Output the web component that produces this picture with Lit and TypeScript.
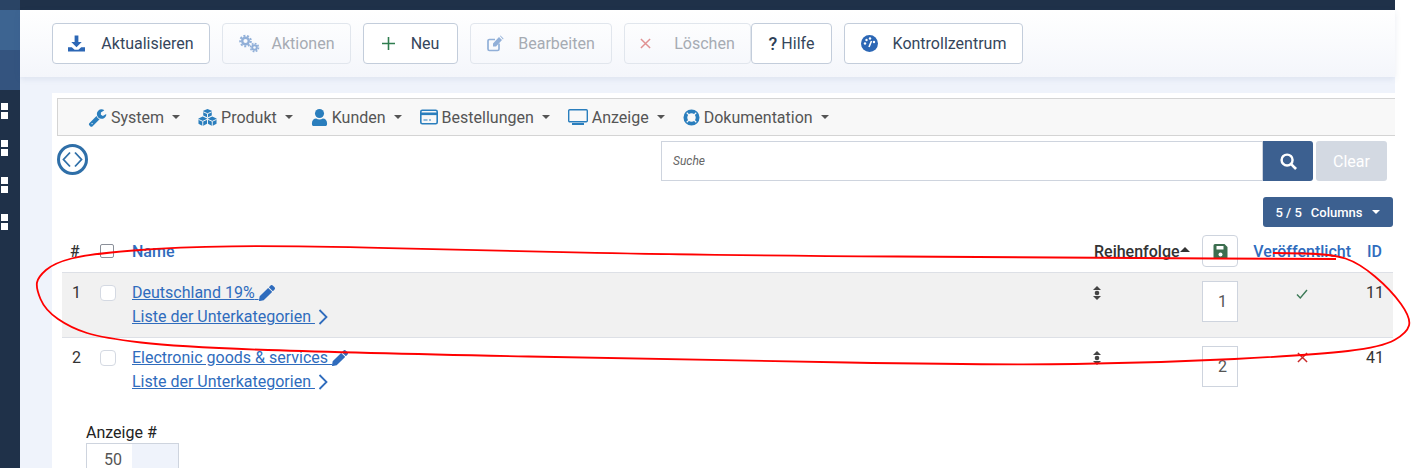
import {LitElement, html, svg, css} from 'lit';
import {customElement} from 'lit/decorators.js';

const icon = (box: string, body: unknown, size = 16, color = 'currentColor') => html`
  <svg class="ic" width=${size} height=${size} viewBox=${box} fill=${color}>${body}</svg>
`;

const pencilPath = 'M498 142l-46 46c-5 5-12 5-17 0L324 77c-5-5-5-12 0-17l46-46c19-19 49-19 68 0l60 60c19 19 19 49 0 68zM284 100L22 362 0 484c-3 16 11 31 28 28l122-21 262-263c5-5 5-12 0-17L301 100c-5-5-12-5-17 0z';
const wrenchPath = 'M448 1472q0-26-19-45t-45-19-45 19-19 45 19 45 45 19 45-19 19-45zm644-420l-682 682q-37 37-90 37-52 0-91-37l-106-108q-38-36-38-90 0-53 38-91l681-681q39 98 114.5 173.5t173.5 114.5zm634-435q0 39-23 106-47 134-164.5 217.5t-258.5 83.5q-185 0-316.5-131.5t-131.5-316.5 131.5-316.5 316.5-131.5q58 0 121.5 16.5t107.5 46.5q16 11 16 28t-16 28l-293 169v224l193 107q5-3 79-48.5t135.5-81 70.5-35.5q15 0 23.5 10t8.5 25z';

const icons = {
  wrench: icon('0 0 1792 1792', svg`<path d=${wrenchPath}/>`, 19),
  cubes: icon('0 0 20 18', svg`
    <path d="M10 0l4.500 2v5L10 9 5.500 7V2z"/>
    <path d="M5 8l4.500 2v5.500L5 18 .5 15.500V10z"/>
    <path d="M15 8l4.500 2v5.500L15 18l-4.500-2.500V10z"/>
    <g stroke="#f8f8f8" stroke-width="1" fill="none">
      <path d="M5.500 3L10 5l4.500-2M10 5v4"/>
      <path d="M.5 11L5 13l4.500-2M5 13v5"/>
      <path d="M10.500 11l4.500 2 4.500-2M15 13v5"/>
    </g>`, 19),
  user: icon('0 0 16 18', svg`<circle cx="8" cy="4.800" r="4.800"/><path d="M1 18a2 2 0 0 1-1-2v-1c0-3 2-5 4.500-5 1 .6 2.200 1 3.500 1s2.500-.4 3.500-1C14 10 16 12 16 15v1a2 2 0 0 1-1 2z"/>`, 17),
  card: icon('0 0 18 15', svg`
    <rect x=".8" y=".8" width="16.400" height="13.400" rx="1.500" fill="none" stroke="currentColor" stroke-width="1.600"/>
    <rect x="1" y="3" width="16" height="2.600"/>
    <path d="M3.500 10.500h4M9 10.500h2" stroke="currentColor" stroke-width="1.200"/>`, 18),
  desktop: icon('0 0 20 16', svg`
    <rect x=".7" y=".7" width="18.600" height="12" rx="1" fill="none" stroke="currentColor" stroke-width="1.400"/>
    <rect x="4" y="14" width="12" height="2"/>`, 20),
  ring: icon('0 0 18 18', svg`
    <circle cx="9" cy="9" r="6.500" fill="none" stroke="currentColor" stroke-width="4"/>
    <path d="M4 4l3 3M14 4l-3 3M4 14l3-3M14 14l-3-3" stroke="#f8f8f8" stroke-width="1.300"/>`, 17),
  download: icon('0 0 18 17', svg`
    <path d="M7 0h4v7h3.500L9 12.500 3.500 7H7z"/>
    <path d="M0 12.500h4l3 2.500h4l3-2.500h4V17H0z"/>`, 17),
  cogs: icon('0 0 21 18', svg`
    <circle cx="6.500" cy="6.500" r="3.300" fill="none" stroke="currentColor" stroke-width="2.400"/>
    <circle cx="6.500" cy="6.500" r="5.300" fill="none" stroke="currentColor" stroke-width="2" stroke-dasharray="2 1.700"/>
    <circle cx="15.500" cy="13" r="2.300" fill="none" stroke="currentColor" stroke-width="2"/>
    <circle cx="15.500" cy="13" r="4" fill="none" stroke="currentColor" stroke-width="1.600" stroke-dasharray="1.800 1.300"/>`, 21),
  plus: icon('0 0 14 14', svg`<path d="M7 0v14M0 7h14" stroke="currentColor" stroke-width="1.700" fill="none"/>`, 13),
  cross: icon('0 0 12 12', svg`<path d="M1 1l10 10M11 1L1 11" stroke="currentColor" stroke-width="1.600" fill="none"/>`, 11),
  edit: icon('0 0 17 16', svg`
    <path d="M12 8v5.500a1.500 1.500 0 0 1-1.500 1.500h-8A1.500 1.500 0 0 1 1 13.500v-8A1.500 1.500 0 0 1 2.500 4H8" fill="none" stroke="currentColor" stroke-width="1.700"/>
    <path d="M6 8l6-6.500 3 3L9 11H6zM13 .5l.5-.5 3 3-.5 1z"/>`, 17),
  gauge: icon('0 0 17 17', svg`
    <circle cx="8.500" cy="8.500" r="8.500"/>
    <g fill="#fff">
      <circle cx="4" cy="8.500" r="1.200"/><circle cx="5.500" cy="5" r="1.200"/><circle cx="9" cy="3.500" r="1.200"/><circle cx="13" cy="7" r="1.200"/>
    </g>
    <path d="M8 12l2.500-6" stroke="#fff" stroke-width="1.600"/>`, 17),
  search: icon('0 0 18 18', svg`<circle cx="7.500" cy="7.500" r="5.800" fill="none" stroke="currentColor" stroke-width="2.600"/><path d="M11.500 11.500L17 17" stroke="currentColor" stroke-width="2.800"/>`, 17),
  save: icon('0 0 14 15', svg`<path d="M1.500 0H11l3 3v10.500a1.500 1.500 0 0 1-1.500 1.500h-11A1.500 1.500 0 0 1 0 13.500v-12A1.500 1.500 0 0 1 1.500 0zM3 2v3.500h7V2z"/><circle cx="7" cy="10.500" r="2" fill="#fff"/>`, 15),
  sort: icon('0 0 9 14', svg`<path d="M4.500 0L8.500 4H.5zM4.500 14L.5 10h8z"/><circle cx="4.500" cy="7" r="2.300"/>`, 14),
  check: icon('0 0 12 10', svg`<path d="M1 5.500L4.300 9 11 1" fill="none" stroke="currentColor" stroke-width="1.400"/>`, 12),
  chevron: icon('0 0 9 16', svg`<path d="M1 1l7 7-7 7" fill="none" stroke="currentColor" stroke-width="1.800"/>`, 16),
  pencil: icon('0 0 512 512', svg`<path d=${pencilPath}/>`, 16),
  circleCode: icon('0 0 31 31', svg`
    <circle cx="15.500" cy="15.500" r="14" fill="none" stroke="currentColor" stroke-width="3"/>
    <path d="M13 8.500l-6.500 7 6.500 7M18 8.500l6.500 7-6.500 7" fill="none" stroke="currentColor" stroke-width="1.800"/>`, 31),
};

const actions = [
  {label: 'Aktualisieren', icon: icons.download, tint: '#2c67b5', width: 158, gap: 16, off: false},
  {label: 'Aktionen', icon: icons.cogs, tint: '#2c67b5', width: 129, gap: 12, off: true},
  {label: 'Neu', icon: icons.plus, tint: '#2f7d4f', width: 95, gap: 16, off: false},
  {label: 'Bearbeiten', icon: icons.edit, tint: '#2c67b5', width: 142, gap: 14, off: true},
  {label: 'Löschen', icon: icons.cross, tint: '#c92a2a', width: 127, gap: 23, off: true},
  {label: 'Hilfe', icon: html`<span class="qm">?</span>`, tint: '#2d3f57', width: 81, gap: 4, off: false},
  {label: 'Kontrollzentrum', icon: icons.gauge, tint: '#2c67b5', width: 179, gap: 15, off: false},
];

const menu = [
  {label: 'System', icon: icons.wrench},
  {label: 'Produkt', icon: icons.cubes},
  {label: 'Kunden', icon: icons.user},
  {label: 'Bestellungen', icon: icons.card},
  {label: 'Anzeige', icon: icons.desktop},
  {label: 'Dokumentation', icon: icons.ring},
];

const rows = [
  {nr: 1, name: 'Deutschland 19%', order: 1, on: true, id: 11},
  {nr: 2, name: 'Electronic goods & services', order: 2, on: false, id: 41},
];

// hand drawn marker round the first row, quadratic through the midpoints
const marker: number[][] = [
  [1336, 259], [1095, 258], [700, 255], [491, 250.7], [286, 245.7], [178, 247], [89, 254], [54, 263],
  [38, 277], [36, 288], [45, 310], [71, 328], [103, 338], [179, 347], [357, 353], [700, 360], [995, 365],
  [1155, 363], [1314, 355], [1382, 347], [1407, 333], [1411, 318], [1391, 290], [1359, 263], [1332, 254], [1273, 253],
];
const markerPath = marker.reduce((d, p, i) => {
  if (i === 0) return `M${p[0]} ${p[1]}`;
  const prev = marker[i - 1];
  return `${d} Q${prev[0]} ${prev[1]} ${(prev[0] + p[0]) / 2} ${(prev[1] + p[1]) / 2}`;
}, '') + ' L1273 253';

@customElement('app-root')
export class AppRoot extends LitElement {
  override render() {
    return html`
      <div class="layout">
        <aside class="side">
          <div class="side-top"></div>
          <div class="side-a"></div>
          <div class="side-b"></div>
          <div class="side-icons">
            ${[0, 1, 2, 3].map(() => html`<div class="squares"><i></i><i></i></div>`)}
          </div>
        </aside>
        <main class="main">
          <div class="topbar"></div>
          <div class="toolbar">
            ${actions.map(a => html`
              <button class="btn ${a.off ? 'off' : ''}" style="width:${a.width}px;gap:${a.gap}px">
                <span class="btn-ic" style="color:${a.tint}">${a.icon}</span>
                <span>${a.label}</span>
              </button>
            `)}
          </div>
          <div class="content">
            <div class="card">
              <nav class="menu">
                ${menu.map(m => html`
                  <span class="menu-item">${m.icon}<span class="menu-label">${m.label}</span><i class="caret"></i></span>
                `)}
              </nav>
              <div class="search-row">
                <span class="circle">${icons.circleCode}</span>
                <div class="search">Suche</div>
                <button class="search-btn">${icons.search}</button>
                <button class="clear">Clear</button>
              </div>
              <div class="columns-row">
                <button class="columns"><span>5 / 5</span><span>Columns</span><i class="caret white"></i></button>
              </div>
              <div class="table">
                <div class="grid head">
                  <span class="hash">#</span>
                  <span><i class="check dark"></i></span>
                  <a class="sort-link">Name</a>
                  <span class="order-head">Reihenfolge<i class="caret up"></i></span>
                  <span class="save">${icons.save}</span>
                  <a class="sort-link pub">Veröffentlicht</a>
                  <a class="sort-link idh">ID</a>
                </div>
                ${rows.map(r => html`
                  <div class="grid row ${r.nr === 1 ? 'shaded' : ''}">
                    <span class="nr">${r.nr}</span>
                    <span><i class="check"></i></span>
                    <div class="links">
                      <div class="link-line"><a>${r.name} </a><span class="pen">${icons.pencil}</span></div>
                      <div class="link-line"><a>Liste der Unterkategorien </a><span class="chev">${icons.chevron}</span></div>
                    </div>
                    <span class="drag">${icons.sort}</span>
                    <span class="order">${r.order}</span>
                    <span class="state ${r.on ? 'on' : 'no'}">${r.on ? icons.check : icons.cross}</span>
                    <span class="idv">${r.id}</span>
                  </div>
                `)}
              </div>
              <div class="pager">
                <div class="pager-label">Anzeige #</div>
                <div class="pager-box"><span class="pager-val">50</span><span class="pager-arrow"></span></div>
              </div>
            </div>
          </div>
        </main>
        <svg class="marker" width="1412" height="468" viewBox="0 0 1412 468">
          <path d=${markerPath} fill="none" stroke="#f00" stroke-width="1.800"/>
        </svg>
      </div>
    `;
  }

  static override styles = css`
    :host {
      display: block;
      width: 1412px;
      height: 468px;
      overflow: hidden;
      background: #fff;
      font-family: 'Roboto', sans-serif;
      font-size: 16px;
      color: #212529;
    }

    .layout {
      position: relative;
      display: flex;
      height: 468px;
      overflow: hidden;
    }

    .ic {
      display: block;
      flex: none;
    }

    .side {
      flex: none;
      width: 20px;
      height: 468px;
      background: #1f3149;
    }

    .side-top { height: 10px; background: #2a4465; }
    .side-a { height: 40px; background: #3d6491; }
    .side-b { height: 40px; background: #34547f; }

    .side-icons {
      display: flex;
      flex-direction: column;
      gap: 21px;
      padding: 13px 0 0 1px;
    }

    .squares {
      display: flex;
      flex-direction: column;
      gap: 2px;
    }

    .squares i {
      display: block;
      width: 7px;
      height: 7px;
      background: #fff;
    }

    .main {
      flex: none;
      width: 1375px;
      height: 468px;
      background: #eff3fb;
    }

    .topbar {
      height: 10px;
      background: #1f3149;
    }

    .toolbar {
      box-sizing: border-box;
      display: flex;
      height: 67px;
      padding: 13px 0 0 32px;
      background: linear-gradient(#fff, #f4f6fb);
      box-shadow: 0 2px 6px rgba(60, 90, 140, 0.1);
    }

    .btn {
      box-sizing: border-box;
      display: flex;
      align-items: center;
      justify-content: center;
      height: 41px;
      margin-right: 12px;
      padding: 0;
      border: 1px solid #c3cddb;
      border-radius: 4px;
      background: #fff;
      font: 16px 'Roboto', sans-serif;
      color: #35465c;
    }

    .btn:nth-child(5) { margin-right: 0; }

    .btn.off {
      border-color: #e1e6ed;
      background: transparent;
      color: #a6abb3;
    }

    .btn.off .btn-ic { opacity: 0.5; }

    .btn-ic {
      display: flex;
      align-items: center;
    }

    .qm {
      font-size: 18px;
      font-weight: 500;
    }

    .content {
      height: 391px;
      padding: 16px 0 0 32px;
    }

    .card {
      height: 375px;
      padding: 5px 0 0 5px;
      background: #fff;
      overflow: hidden;
    }

    .menu {
      box-sizing: border-box;
      display: flex;
      align-items: center;
      gap: 18px;
      height: 38px;
      padding-left: 30px;
      border: 1px solid #d4d4d4;
      border-right: none;
      background: #f8f8f8;
      color: #555;
    }

    .menu-item {
      display: flex;
      align-items: center;
      gap: 4px;
    }

    .menu-item .ic { color: #2a7ebd; }

    .menu-label { margin-right: 2px; }

    .caret {
      display: inline-block;
      width: 0;
      height: 0;
      margin-left: 2px;
      border-top: 4px solid #555;
      border-left: 4.500px solid transparent;
      border-right: 4.500px solid transparent;
    }

    .caret.white { border-top-color: #fff; }

    .caret.up {
      margin: 0 0 3px;
      border-top: none;
      border-bottom: 5px solid #333;
      border-left-width: 5.500px;
      border-right-width: 5.500px;
    }

    .search-row {
      display: flex;
      align-items: flex-start;
      height: 40px;
      margin-top: 5px;
      padding-right: 8px;
    }

    .circle {
      margin: 3px auto 0 0;
      color: #2f6fa8;
    }

    .search {
      box-sizing: border-box;
      width: 602px;
      height: 40px;
      padding-left: 11px;
      border: 1px solid #ced4de;
      font-size: 12px;
      font-style: italic;
      line-height: 38px;
      color: #666;
    }

    .search-btn {
      display: flex;
      align-items: center;
      justify-content: center;
      width: 50px;
      height: 40px;
      padding: 0;
      border: none;
      border-radius: 0 3px 3px 0;
      background: #3c6090;
      color: #fff;
    }

    .clear {
      width: 71px;
      height: 40px;
      margin-left: 3px;
      padding: 0;
      border: none;
      border-radius: 3px;
      background: #d3d9e2;
      color: #fff;
      font: 16px 'Roboto', sans-serif;
    }

    .columns-row {
      display: flex;
      justify-content: flex-end;
      margin-top: 16px;
      padding-right: 2px;
    }

    .columns {
      display: flex;
      align-items: center;
      justify-content: center;
      gap: 9px;
      width: 130px;
      height: 30px;
      padding: 0;
      border: none;
      border-radius: 3px;
      background: #3c6090;
      color: #fff;
      font: 500 13px 'Roboto', sans-serif;
    }

    .columns .caret { margin-left: 1px; }

    .table {
      width: 1331px;
      margin: 8px 0 0 5px;
    }

    .grid {
      display: grid;
      grid-template-columns: 38px 32px 958px 112px 36px 113px 42px;
      box-sizing: border-box;
    }

    .head {
      align-items: center;
      height: 38px;
      padding-bottom: 6px;
      border-bottom: 1px solid #dde0e6;
    }

    .hash { padding-left: 8px; font-weight: 500; color: #333; }

    .sort-link {
      font-weight: 500;
      color: #2f6cbd;
    }

    .pub { justify-self: end; white-space: nowrap; }
    .idh { justify-self: end; padding-right: 11px; }

    .order-head {
      display: flex;
      align-items: center;
      padding-left: 4px;
      font-weight: 500;
      color: #333;
    }

    .save {
      box-sizing: border-box;
      display: flex;
      align-items: center;
      justify-content: center;
      height: 32px;
      border: 1px solid #ced4de;
      border-radius: 4px;
      color: #3c6e4f;
    }

    .row {
      align-items: start;
      height: 65px;
      padding-top: 8px;
      border-bottom: 1px solid #dde0e6;
      line-height: 24px;
    }

    .row:last-child { border-bottom: none; }
    .shaded { background: #f1f1f1; }

    .nr { padding-left: 10px; color: #333; }

    .check {
      box-sizing: border-box;
      display: block;
      width: 16px;
      height: 16px;
      margin-top: 4px;
      border: 1px solid #d4d9e2;
      border-radius: 4px;
      background: #fff;
    }

    .check.dark {
      width: 14px;
      height: 14px;
      margin-top: 0;
      border-color: #8a8f99;
      border-radius: 2px;
    }

    .links a {
      color: #2f6cbd;
      text-decoration: underline;
      white-space: pre;
    }

    .link-line {
      display: flex;
      align-items: center;
      height: 24px;
      color: #2f6cbd;
    }

    .pen { margin-left: 0; }

    .drag {
      display: flex;
      justify-content: center;
      width: 14px;
      margin: 5px 0 0 0;
      color: #444;
    }

    .order {
      box-sizing: border-box;
      height: 41px;
      padding: 8px 10px 0 0;
      border: 1px solid #ced4de;
      background: #fff;
      text-align: right;
      color: #555;
    }

    .state {
      display: flex;
      justify-content: center;
      padding: 7px 0 0 15px;
    }

    .state.on { color: #3c7a57; }
    .state.no { color: #c92a2a; padding-top: 6px; }

    .idv {
      text-align: right;
      padding-right: 9px;
      color: #333;
    }

    .pager {
      margin: 20px 0 0 29px;
    }

    .pager-label {
      height: 20px;
      line-height: 20px;
      color: #222;
    }

    .pager-box {
      box-sizing: border-box;
      display: flex;
      width: 93px;
      height: 40px;
      border: 1px solid #ced4de;
    }

    .pager-val {
      box-sizing: border-box;
      width: 45px;
      padding: 6px 0 0 17px;
      color: #555;
    }

    .pager-arrow {
      flex: 1;
      background: #eff3fb;
    }

    .marker {
      position: absolute;
      top: 0;
      left: 0;
      pointer-events: none;
    }
  `;
}

declare global {
  interface HTMLElementTagNameMap {
    'app-root': AppRoot;
  }
}
